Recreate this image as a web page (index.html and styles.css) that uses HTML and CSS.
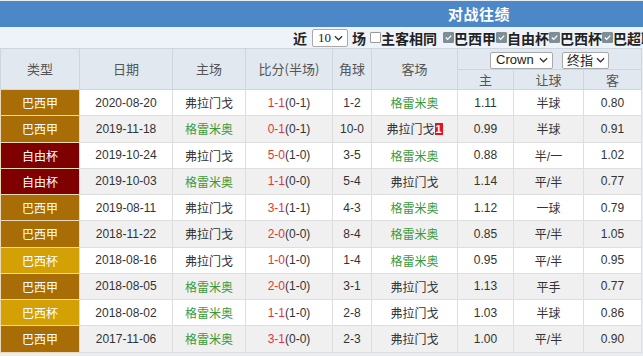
FILE: index.html
```html
<!DOCTYPE html>
<html lang="zh">
<head>
<meta charset="utf-8">
<title>对战往绩</title>
<link rel="stylesheet" href="styles.css">
</head>
<body>
<div class="page">
  <div class="title">对战往绩</div>
  <div class="filter">
    <span class="lbl">近</span>
    <span class="sel sel-n">10<svg class="chev" viewBox="0 0 10 6"><path d="M1 1l4 4 4-4" fill="none" stroke="#333" stroke-width="1.4"/></svg></span>
    <span class="lbl">场</span>
    <span class="cb"></span><span class="lbl">主客相同</span>
    <span class="cb on sp"><svg viewBox="0 0 11 11"><path d="M2.3 5.6l2.2 2.2 4.3-4.6" fill="none" stroke="#fff" stroke-width="1.6"/></svg></span><span class="lbl">巴西甲</span><span class="cb on"><svg viewBox="0 0 11 11"><path d="M2.3 5.6l2.2 2.2 4.3-4.6" fill="none" stroke="#fff" stroke-width="1.6"/></svg></span><span class="lbl">自由杯</span><span class="cb on"><svg viewBox="0 0 11 11"><path d="M2.3 5.6l2.2 2.2 4.3-4.6" fill="none" stroke="#fff" stroke-width="1.6"/></svg></span><span class="lbl">巴西杯</span><span class="cb on"><svg viewBox="0 0 11 11"><path d="M2.3 5.6l2.2 2.2 4.3-4.6" fill="none" stroke="#fff" stroke-width="1.6"/></svg></span><span class="lbl">巴超联</span>
  </div>
  <table class="grid">
    <colgroup>
      <col class="c1"><col class="c2"><col class="c3"><col class="c4"><col class="c5"><col class="c6"><col class="c7"><col class="c8"><col class="c9">
    </colgroup>
    <thead>
      <tr class="h1">
        <th rowspan="2">类型</th>
        <th rowspan="2">日期</th>
        <th rowspan="2">主场</th>
        <th rowspan="2">比分(半场)</th>
        <th rowspan="2">角球</th>
        <th rowspan="2">客场</th>
        <th colspan="3" class="oddsel">
          <span class="sel sel-c">Crown<svg class="chev" viewBox="0 0 10 6"><path d="M1 1l4 4 4-4" fill="none" stroke="#333" stroke-width="1.4"/></svg></span>
          <span class="sel sel-z">终指<svg class="chev" viewBox="0 0 10 6"><path d="M1 1l4 4 4-4" fill="none" stroke="#333" stroke-width="1.4"/></svg></span>
        </th>
      </tr>
      <tr class="h2">
        <th>主</th><th>让球</th><th>客</th>
      </tr>
    </thead>
    <tbody>
      <tr><td class="t jia">巴西甲</td><td>2020-08-20</td><td>弗拉门戈</td><td><span class="r">1-1</span>(0-1)</td><td>1-2</td><td class="g">格雷米奥</td><td>1.11</td><td>半球</td><td>0.80</td></tr>
      <tr class="alt"><td class="t jia">巴西甲</td><td>2019-11-18</td><td class="g">格雷米奥</td><td><span class="r">0-1</span>(0-1)</td><td>10-0</td><td>弗拉门戈<span class="badge">1</span></td><td>0.99</td><td>半球</td><td>0.91</td></tr>
      <tr><td class="t lib">自由杯</td><td>2019-10-24</td><td>弗拉门戈</td><td><span class="r">5-0</span>(1-0)</td><td>3-5</td><td class="g">格雷米奥</td><td>0.88</td><td>半/一</td><td>1.02</td></tr>
      <tr class="alt"><td class="t lib">自由杯</td><td>2019-10-03</td><td class="g">格雷米奥</td><td><span class="r">1-1</span>(0-0)</td><td>5-4</td><td>弗拉门戈</td><td>1.14</td><td>平/半</td><td>0.77</td></tr>
      <tr><td class="t jia">巴西甲</td><td>2019-08-11</td><td>弗拉门戈</td><td><span class="r">3-1</span>(1-1)</td><td>4-3</td><td class="g">格雷米奥</td><td>1.12</td><td>一球</td><td>0.79</td></tr>
      <tr class="alt"><td class="t jia">巴西甲</td><td>2018-11-22</td><td>弗拉门戈</td><td><span class="r">2-0</span>(0-0)</td><td>8-4</td><td class="g">格雷米奥</td><td>0.85</td><td>平/半</td><td>1.05</td></tr>
      <tr><td class="t cup">巴西杯</td><td>2018-08-16</td><td>弗拉门戈</td><td><span class="r">1-0</span>(1-0)</td><td>1-4</td><td class="g">格雷米奥</td><td>0.95</td><td>平/半</td><td>0.95</td></tr>
      <tr class="alt"><td class="t jia">巴西甲</td><td>2018-08-05</td><td class="g">格雷米奥</td><td><span class="r">2-0</span>(1-0)</td><td>3-1</td><td>弗拉门戈</td><td>1.13</td><td>平手</td><td>0.77</td></tr>
      <tr><td class="t cup">巴西杯</td><td>2018-08-02</td><td class="g">格雷米奥</td><td><span class="r">1-1</span>(1-0)</td><td>2-8</td><td>弗拉门戈</td><td>1.03</td><td>半球</td><td>0.86</td></tr>
      <tr class="alt"><td class="t jia">巴西甲</td><td>2017-11-06</td><td class="g">格雷米奥</td><td><span class="r">3-1</span>(0-0)</td><td>2-3</td><td>弗拉门戈</td><td>1.00</td><td>平/半</td><td>0.90</td></tr>
    </tbody>
  </table>
  <div class="foot"></div>
</div>
</body>
</html>
```

FILE: styles.css
```css
html, body {
  margin: 0;
  padding: 0;
  background: #ffffff;
}
body {
  width: 643px;
  height: 356px;
  overflow: hidden;
  font-family: "Liberation Sans", "Noto Sans CJK SC", sans-serif;
  font-size: 12px;
  color: #333;
}
.page {
  width: 643px;
  overflow: hidden;
  padding-top: 1px;
  background: #e9edf2;
}
.title {
  height: 26px;
  line-height: 26px;
  background: #4c88c8;
  color: #ffffff;
  font-family: "Noto Sans CJK SC", sans-serif;
  font-weight: bold;
  font-size: 15px;
  padding-left: 448px;
  letter-spacing: 0.5px;
}
.filter {
  height: 21px;
  background: #eef3f9;
  padding-left: 293px;
  display: flex;
  align-items: center;
  white-space: nowrap;
  font-family: "Noto Sans CJK SC", sans-serif;
  font-weight: bold;
  font-size: 14px;
  color: #222;
}
.lbl {
  line-height: 18px;
  flex: none;
}
.sel {
  flex: none;
  display: inline-flex;
  align-items: center;
  justify-content: space-between;
  box-sizing: border-box;
  background: #ffffff;
  border: 1px solid #a9a9a9;
  border-radius: 2px;
  font-weight: normal;
  color: #222;
}
.sel .chev {
  width: 9px;
  height: 6px;
}
.sel-n {
  width: 36px;
  height: 18px;
  margin: 0 4px 0 5px;
  padding: 0 4px 0 5px;
  font-family: "Liberation Serif", serif;
  font-size: 13px;
}
.cb {
  flex: none;
  box-sizing: border-box;
  width: 11px;
  height: 11px;
  margin-left: 4px;
  background: #ffffff;
  border: 1px solid #9a9a9a;
  border-radius: 1px;
  display: inline-flex;
}
.cb.on {
  margin-left: 0;
  background: #7e8e96;
  border-color: #7e8e96;
}
.cb.on.sp {
  margin-left: 6px;
}
.cb svg {
  width: 100%;
  height: 100%;
}
.grid {
  width: 641px;
  table-layout: fixed;
  border-collapse: collapse;
  background: #ffffff;
}
.c1 { width: 79px; }
.c2 { width: 93px; }
.c3 { width: 73px; }
.c4 { width: 87px; }
.c5 { width: 39px; }
.c6 { width: 86px; }
.c7 { width: 56px; }
.c8 { width: 70px; }
.c9 { width: 58px; }
.grid th {
  background: #e2e8ef;
  color: #555;
  font-family: "Noto Sans CJK SC", sans-serif;
  font-weight: normal;
  font-size: 13px;
  border: 1px solid #cdd5de;
  padding: 0;
  height: 19px;
  line-height: 18px;
  text-align: center;
}
.grid th.oddsel {
  padding-top: 1px;
}
.oddsel .sel {
  display: inline-flex;
  vertical-align: middle;
  height: 17px;
  margin: 0 3px;
  font-size: 13px;
}
.sel-c {
  width: 63px;
  padding: 0 4px 0 5px;
  font-family: "Liberation Sans", sans-serif;
}
.sel-z {
  width: 47px;
  padding: 0 3px 0 4px;
  font-family: "Noto Sans CJK SC", sans-serif;
}
.grid td {
  height: 25.25px;
  padding: 0;
  text-align: center;
  border: 1px solid #dedede;
  white-space: nowrap;
  color: #333;
}
.grid tr.alt td {
  background: #f0f0f0;
}
.grid td.t {
  color: #ffffff;
  border-color: #e8d9b8;
}
.grid tr td.jia { background: #a86d07; }
.grid tr td.lib { background: #7e0000; }
.grid tr td.cup { background: #d3a006; }
.r { color: #e5333b; }
.grid td.g { color: #3c9a3c; }
.badge {
  display: inline-block;
  vertical-align: 1px;
  background: #e8121a;
  color: #ffffff;
  font-weight: bold;
  font-size: 11px;
  line-height: 12px;
  width: 8px;
  text-align: center;
}
.foot {
  height: 10px;
  background: #e9edf2;
}
```
